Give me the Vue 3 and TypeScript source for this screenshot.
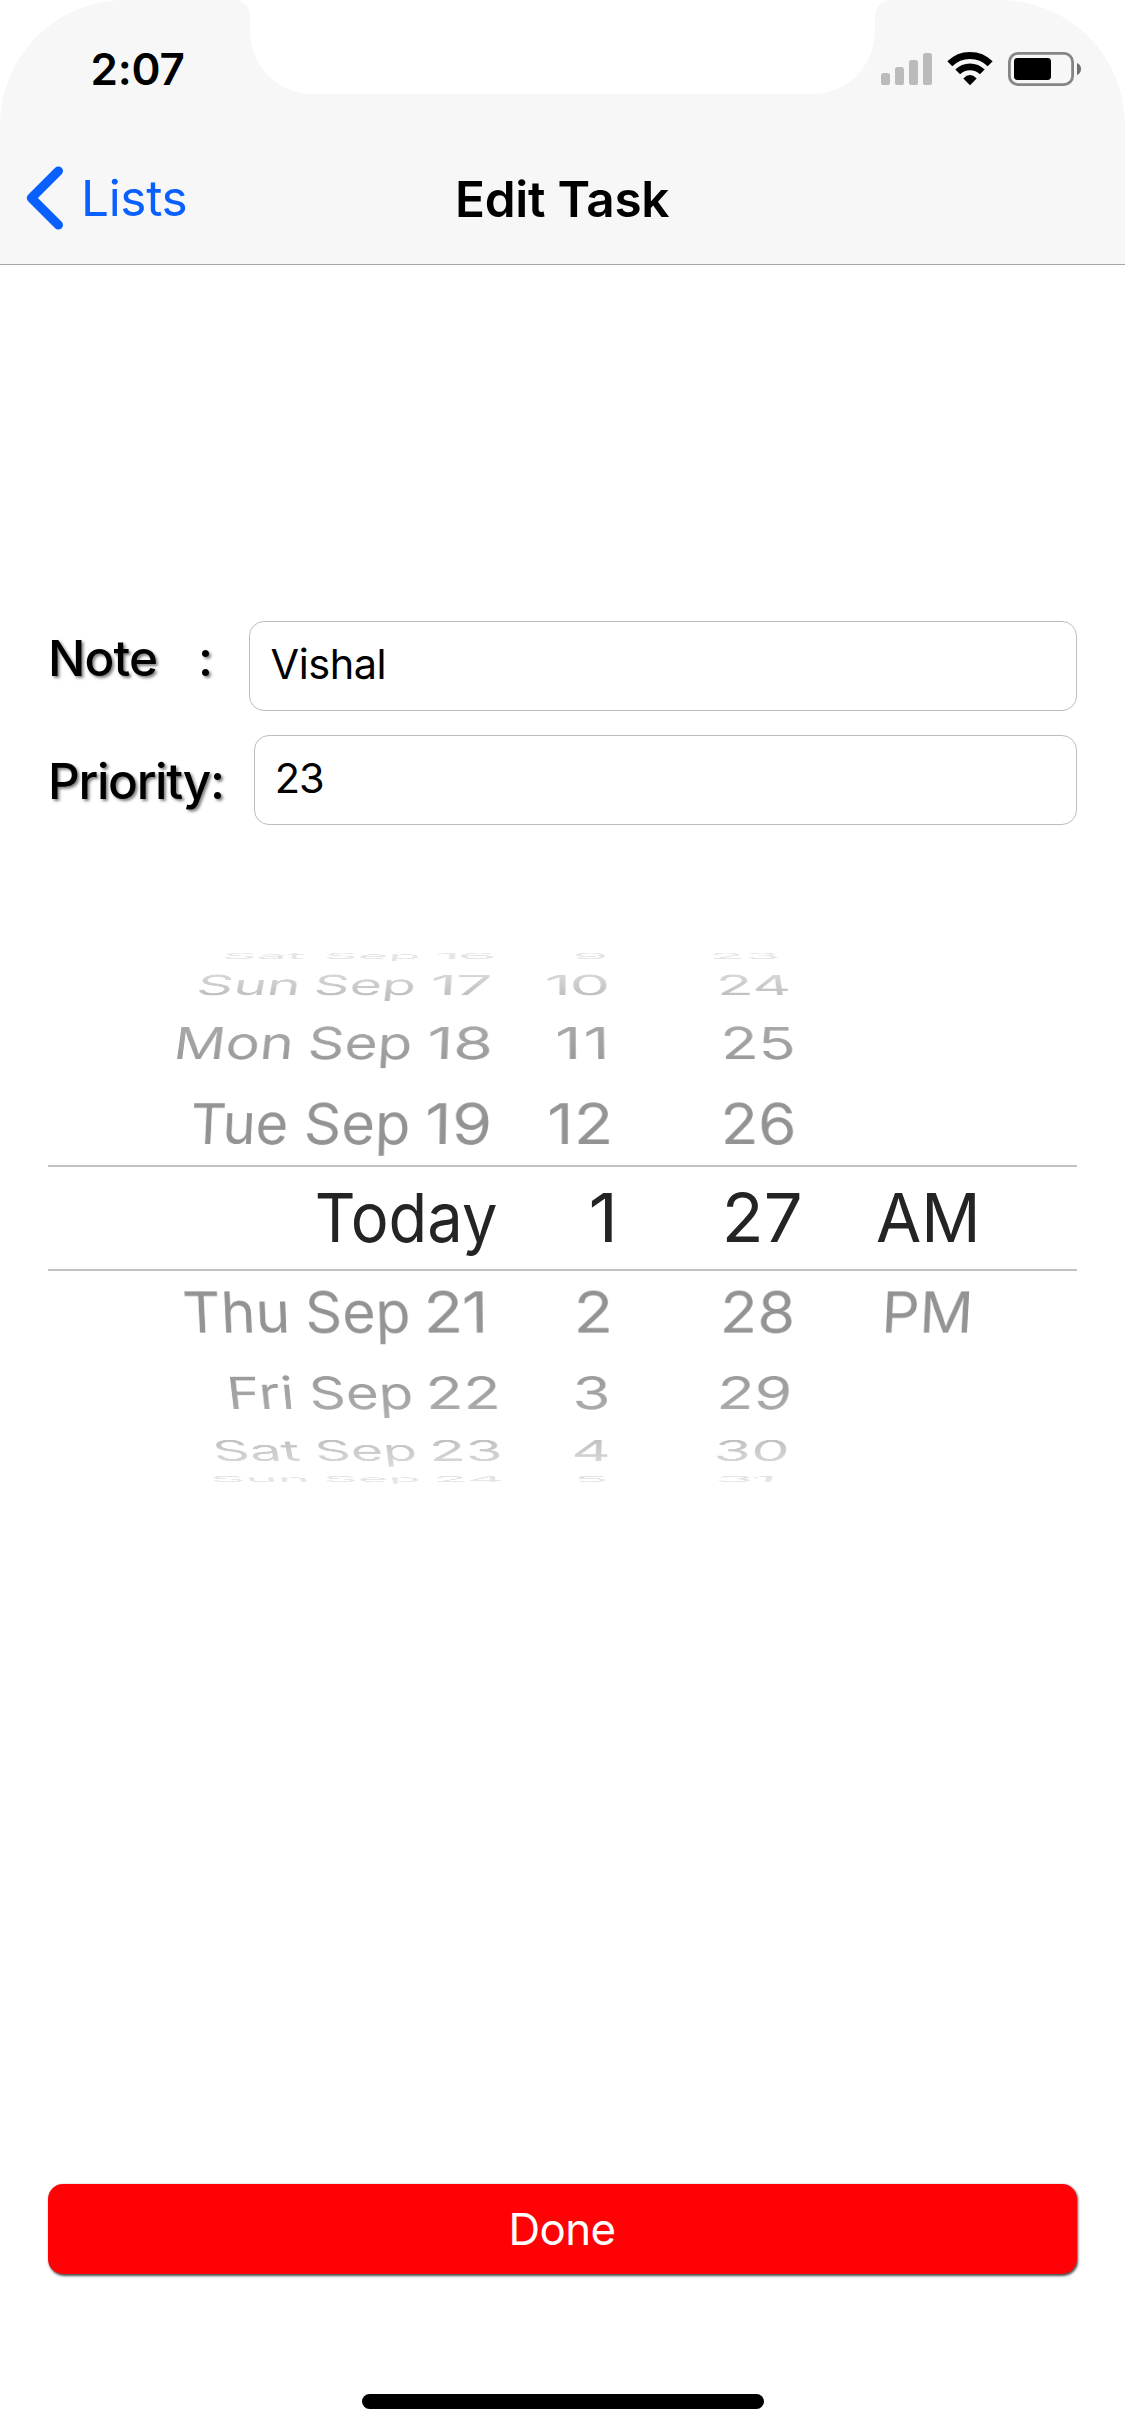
<script setup lang="ts">
interface WheelItem {
  text: string
  left: number
  right: number
}
interface WheelRow {
  baseline: number
  cap: number
  tilt: number
  items: WheelItem[]
}

const FAMILY = 'Inter, "Liberation Sans", sans-serif'
const WHEEL_SIZE = 68
const WHEEL_CAP = 49.4
const WHEEL_BASELINE = 75
const WHEEL_TOP = 930
const CENTER_X = 562.5

const ctx = document.createElement('canvas').getContext('2d')!

function inkOf(text: string, size: number, weight = 400) {
  ctx.font = `${weight} ${size}px ${FAMILY}`
  const m = ctx.measureText(text)
  return {
    bearing: -m.actualBoundingBoxLeft,
    width: m.actualBoundingBoxLeft + m.actualBoundingBoxRight,
  }
}

// Tracks a label so that its visible glyphs span exactly `width` pixels.
function tracked(text: string, size: number, weight: number, width: number) {
  const ink = inkOf(text, size, weight)
  const gap = text.length > 1 ? (width - ink.width) / (text.length - 1) : 0
  return {
    fontSize: `${size}px`,
    fontWeight: weight,
    letterSpacing: `${gap.toFixed(3)}px`,
    marginLeft: `${(-ink.bearing).toFixed(2)}px`,
  }
}

const item = (text: string, left: number, right: number): WheelItem => ({ text, left, right })

const rows: WheelRow[] = [
  { baseline: 959, cap: 6.2, tilt: -0.007, items: [item('Sat', 225, 303.7), item('Sep', 326.7, 418.7), item('16', 437.3, 494.3), item('9', 575.7, 606), item('23', 713.3, 777)] },
  { baseline: 995, cap: 20.5, tilt: -0.013, items: [item('Sun', 199.7, 296.7), item('Sep', 316.7, 414), item('17', 433.3, 489.7), item('10', 547.7, 606.5), item('24', 720.7, 787)] },
  { baseline: 1059, cap: 32.6, tilt: -0.0115, items: [item('Mon', 178.5, 289.7), item('Sep', 310.7, 410.3), item('18', 430, 490.3), item('11', 558, 604.3), item('25', 725, 792.3)] },
  { baseline: 1144, cap: 41.3, tilt: -0.0056, items: [item('Tue', 193, 286.3), item('Sep', 306.7, 408.3), item('19', 428, 489.3), item('12', 550, 609), item('26', 725, 793.5)] },
  { baseline: 1241.7, cap: 49.4, tilt: 0, items: [item('Today', 317.6, 496.3), item('1', 591.8, 612.1), item('27', 726.8, 800), item('AM', 876.9, 975.3)] },
  { baseline: 1332.6, cap: 41.3, tilt: 0.0056, items: [item('Thu', 185.3, 285.7), item('Sep', 307.7, 408.3), item('21', 428.3, 483), item('2', 578.4, 609), item('28', 724.6, 792.7), item('PM', 886.1, 968.5)] },
  { baseline: 1409, cap: 32.2, tilt: 0.0115, items: [item('Fri', 231, 291.3), item('Sep', 311.7, 411), item('22', 430, 496.7), item('3', 576.1, 607.1), item('29', 721.6, 789.3)] },
  { baseline: 1460.8, cap: 20.5, tilt: 0.013, items: [item('Sat', 215.3, 298.7), item('Sep', 317.3, 414.7), item('23', 433.3, 499), item('4', 573.9, 607.5), item('30', 717.4, 786.2)] },
  { baseline: 1482, cap: 6, tilt: 0.007, items: [item('Sun', 212.3, 305.7), item('Sep', 325.7, 418.7), item('24', 437.3, 500.7), item('5', 577.3, 606), item('31', 718.1, 772.1)] },
]

// Projects a wheel entry onto the drum: squashed vertically, converging on the center axis.
function drum(row: WheelRow, entry: WheelItem) {
  const ink = inkOf(entry.text, WHEEL_SIZE)
  const atBase = (x: number) => CENTER_X + (x - CENTER_X) * (1 - row.tilt / 2)
  const left = atBase(entry.left)
  const width = atBase(entry.right) - left
  let sx = width / ink.width
  let gap = 0
  // A narrow "1" keeps its shape and takes extra room beside it instead.
  if (entry.text.length === 2 && entry.text.includes('1')) {
    sx = 0.955
    gap = width / sx - ink.width
  }
  const letterSpacing = `${gap.toFixed(3)}px`
  const sy = row.cap / WHEEL_CAP
  const tx = left - CENTER_X - ink.bearing * sx
  const dy = row.baseline - WHEEL_TOP
  if (row.tilt === 0) {
    return {
      letterSpacing,
      transform: `translate(${CENTER_X + tx}px, ${dy - WHEEL_BASELINE}px) scale(${sx}, 1)`,
    }
  }
  const w = (row.tilt / row.cap) * sy
  return {
    letterSpacing,
    transform: `translate(${CENTER_X}px, ${dy}px) matrix3d(${sx},0,0,0, 0,${sy},0,${w.toFixed(7)}, 0,0,1,0, ${tx},0,0,1) translateY(${-WHEEL_BASELINE}px)`,
  }
}

const faded = rows.filter((r) => r.tilt !== 0)
const current = rows.filter((r) => r.tilt === 0)
</script>

<template>
  <div class="screen">
    <header class="top">
      <div class="status">
        <span class="clock" :style="tracked('2:07', 44, 600, 91)">2:07</span>
        <svg class="notch" width="1125" height="96" viewBox="0 0 1125 96">
          <path
            d="M236 0C244 1 250 7 250 17C250 26 250 31 250.5 37C253 67 277 93 312 94H813C848 93 872 67 874.5 37C875 31 875 26 875 17C875 7 881 1 889 0Z"
            fill="#fff"
          />
        </svg>
        <svg class="indicators" width="201" height="36" viewBox="881 51 201 36">
          <g fill="#bbb">
            <rect x="881" y="73" width="9" height="12" rx="2.6" />
            <rect x="895" y="67" width="9" height="18" rx="2.6" />
            <rect x="909" y="60" width="9" height="25" rx="2.6" />
            <rect x="923" y="53" width="9" height="32" rx="2.6" />
          </g>
          <g fill="none" stroke="#000">
            <path d="M949.8 63.8A28.5 28.5 0 0 1 990.2 63.8" stroke-width="7" />
            <path d="M957.7 71.9A17.4 17.4 0 0 1 982.3 71.9" stroke-width="6.8" />
          </g>
          <path d="M963.3 78.4Q970 71.6 976.7 78.4L970 85.2Z" />
          <rect x="1009.4" y="53.4" width="63.2" height="31.2" rx="8.5" fill="none" stroke="#858585" stroke-width="2.8" />
          <rect x="1014" y="58" width="37" height="22" rx="3.4" />
          <path d="M1077 63C1079.8 64 1081 66.4 1081 69S1079.8 74 1077 75Z" fill="#707070" />
        </svg>
      </div>
      <nav class="nav">
        <div class="back">
          <svg width="40" height="66" viewBox="25 165.5 40 66">
            <path
              d="M58.4 171.6L31.4 198.5L58.4 225.4"
              fill="none"
              stroke="#0a60ff"
              stroke-width="9.2"
              stroke-linecap="round"
              stroke-linejoin="round"
            />
          </svg>
          <div class="back-text"><span :style="tracked('Lists', 49.5, 400, 100.6)">Lists</span></div>
        </div>
        <div class="title"><span :style="tracked('Edit Task', 49.5, 600, 211.3)">Edit Task</span></div>
      </nav>
    </header>

    <main class="form">
      <div class="row">
        <div class="label note">
          <span class="word" :style="tracked('Note', 49.5, 500, 105)">Note</span>
          <span class="colon" :style="tracked(':', 49.5, 500, 8)">:</span>
        </div>
        <div class="field"><span :style="tracked('Vishal', 41.5, 400, 112)">Vishal</span></div>
      </div>
      <div class="row">
        <div class="label priority">
          <span :style="tracked('Priority:', 49.5, 500, 171)">Priority:</span>
        </div>
        <div class="field number"><span :style="tracked('23', 41.5, 400, 45.3)">23</span></div>
      </div>
    </main>

    <section class="picker">
      <div class="wheel faded">
        <template v-for="row in faded" :key="row.baseline">
          <span v-for="e in row.items" :key="e.text" class="entry" :style="drum(row, e)">{{ e.text }}</span>
        </template>
      </div>
      <div class="wheel current">
        <template v-for="row in current" :key="row.baseline">
          <span v-for="e in row.items" :key="e.text" class="entry" :style="drum(row, e)">{{ e.text }}</span>
        </template>
      </div>
      <div class="band"></div>
    </section>

    <button class="done" type="button"><span :style="tracked('Done', 43.8, 400, 102.9)">Done</span></button>
    <div class="home"></div>
  </div>
</template>

<style>
body {
  margin: 0;
  background: #fff;
}
</style>

<style scoped>
.screen {
  width: 1125px;
  height: 2436px;
  overflow: hidden;
  display: flex;
  flex-direction: column;
  background: #fff;
  color: #000;
  font-family: Inter, "Liberation Sans", sans-serif;
}
.screen span {
  white-space: pre;
}
.top {
  height: 264px;
  flex: none;
  background: #f7f7f7;
  border-bottom: 1px solid #a7a7a7;
  border-radius: 125px 125px 0 0;
}
.status {
  position: relative;
  height: 138px;
  display: flex;
  align-items: flex-start;
  justify-content: space-between;
  padding: 0 43px 0 92.5px;
}
.clock {
  line-height: 138px;
}
.notch {
  position: absolute;
  left: 0;
  top: 0;
}
.indicators {
  margin-top: 51px;
}
.nav {
  height: 122px;
  display: grid;
  grid-template-columns: 458px 1fr;
  line-height: 122px;
}
.back {
  display: flex;
  align-items: center;
  height: 120px;
  line-height: 120px;
  padding-left: 25px;
  color: #0a60ff;
}
.back svg {
  flex: none;
}
.back-text {
  padding-left: 20px;
  height: 120px;
}
.back-text span,
.title span {
  display: inline-block;
}
.form {
  margin-top: 356px;
  padding: 0 48px 0 51px;
  display: flex;
  flex-direction: column;
  gap: 24px;
}
.row {
  display: flex;
  height: 90px;
}
.label {
  flex: none;
  text-shadow: 2px 2px 3px rgba(0, 0, 0, 0.5);
}
.note {
  display: grid;
  grid-template-columns: 150px 1fr;
  width: 198px;
  height: 74px;
  line-height: 74px;
}
.priority {
  display: flex;
  width: 203px;
  line-height: 93px;
}
.field {
  flex: 1;
  box-sizing: border-box;
  height: 90px;
  border: 1px solid #bdbdbd;
  border-radius: 15px;
  padding-left: 21.5px;
  display: flex;
  line-height: 84px;
}
.number {
  padding-left: 22.8px;
}
.picker {
  margin-top: 105px;
  height: 576px;
  flex: none;
  display: grid;
  grid-template-columns: 1125px;
  grid-template-rows: 576px;
}
.wheel {
  grid-area: 1 / 1;
  display: grid;
  grid-template-columns: 1125px;
  justify-items: start;
  align-items: start;
}
.faded {
  color: #939393;
  -webkit-mask-image: linear-gradient(
    to bottom,
    rgba(0, 0, 0, 0.2) 22px,
    rgba(0, 0, 0, 0.36) 44px,
    rgba(0, 0, 0, 0.58) 65px,
    rgba(0, 0, 0, 0.8) 96px,
    rgba(0, 0, 0, 0.92) 129px,
    #000 190px,
    #000 385px,
    rgba(0, 0, 0, 0.92) 447px,
    rgba(0, 0, 0, 0.78) 480px,
    rgba(0, 0, 0, 0.57) 510px,
    rgba(0, 0, 0, 0.38) 532px,
    rgba(0, 0, 0, 0.2) 554px
  );
}
.current {
  color: #242424;
}
.entry {
  grid-area: 1 / 1;
  font-size: 68px;
  line-height: 100px;
  height: 100px;
  transform-origin: 0 0;
}
.band {
  grid-area: 1 / 1;
  box-sizing: border-box;
  height: 106px;
  margin: 235px 48px 0;
  border-top: 2px solid #c1c1c1;
  border-bottom: 2px solid #c1c1c1;
}
.done {
  flex: none;
  margin: 678px 48px 0 48px;
  height: 90px;
  padding: 1px 0 0 2px;
  border: 0;
  border-radius: 15px;
  background: #fe0206;
  color: #fff;
  font-family: inherit;
  line-height: 90px;
  box-shadow: 1px 1.5px 2.5px rgba(0, 0, 0, 0.7);
}
.home {
  flex: none;
  margin: 120px auto 0 362px;
  width: 402px;
  height: 15px;
  border-radius: 7.5px;
  background: #000;
}
</style>
